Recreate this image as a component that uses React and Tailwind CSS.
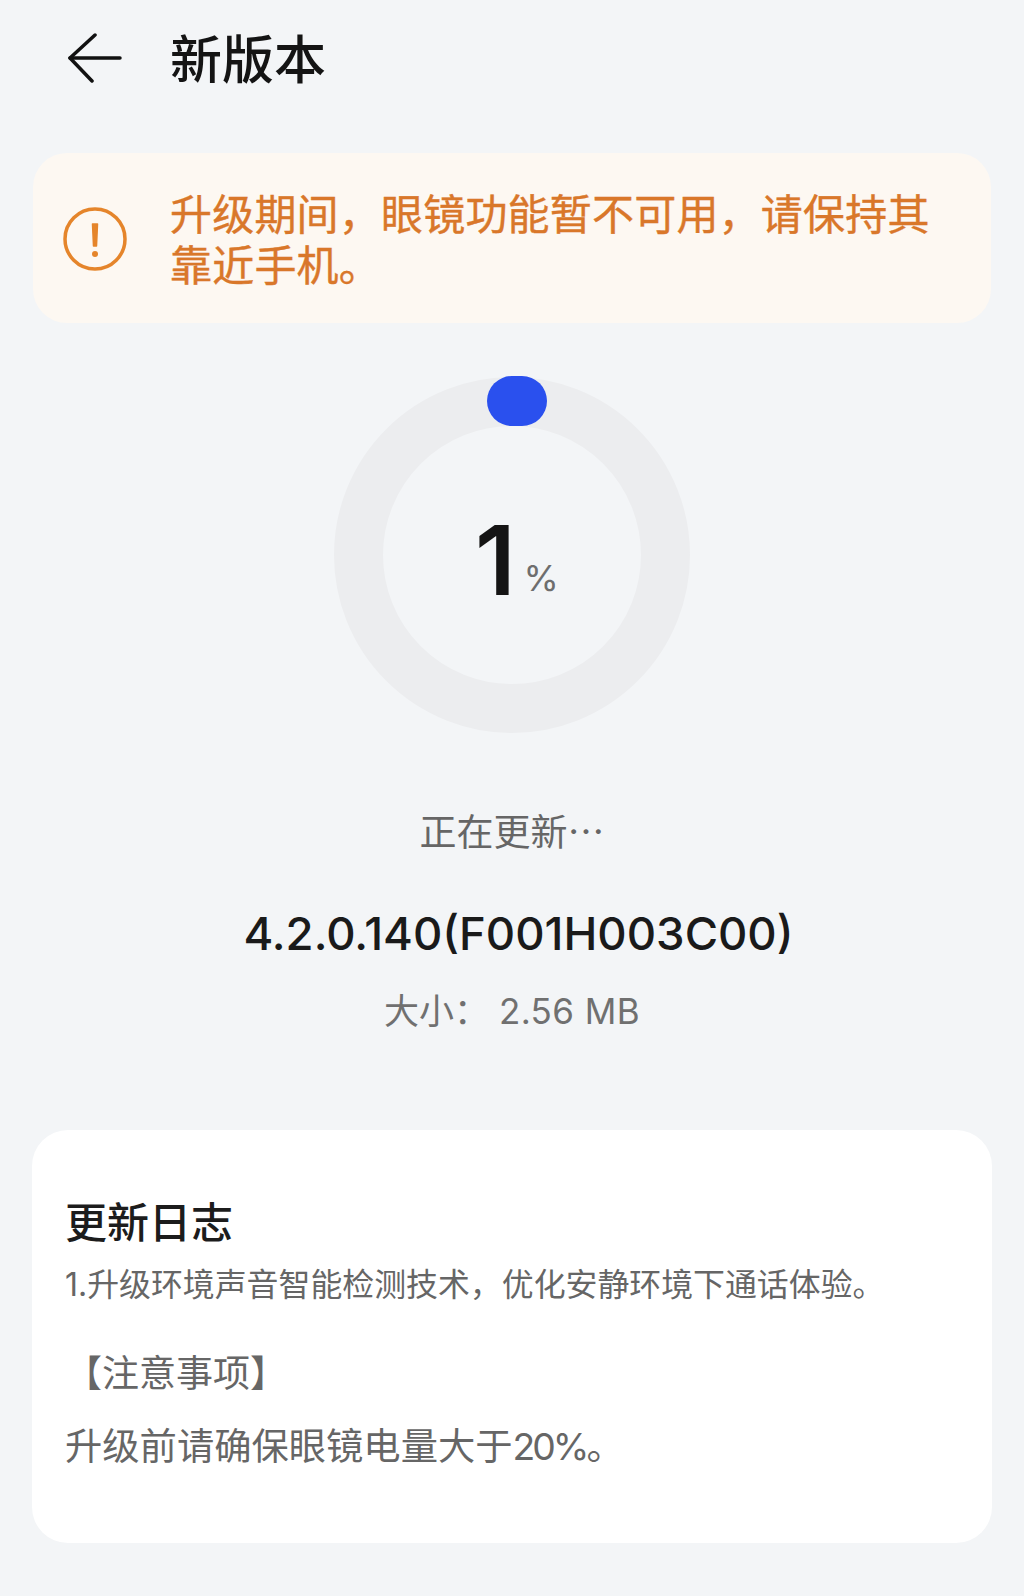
export default function App() {
  return (
    <div className="w-[1024px] h-[1596px] bg-[#f3f5f7] overflow-hidden font-['Inter','Noto_Sans_CJK_SC',sans-serif]">
      {/* header */}
      <div className="h-[120px] flex items-center pl-[68px]">
        <svg width="54" height="50" viewBox="0 0 54 50" fill="none" stroke="#111" strokeWidth="3.5" strokeLinecap="round" strokeLinejoin="round" className="-translate-y-[2px]">
          <path d="M52 25H2" />
          <path d="M27 2L2 25L24 48" />
        </svg>
        <h1 className="ml-[48px] text-[52px] font-medium leading-none text-[#141414] translate-y-[1px]">新版本</h1>
      </div>

      {/* warning */}
      <div className="mt-[33px] mx-[33px] h-[170px] bg-[#fdf8f2] rounded-[34px] flex items-center pl-[30px] pr-[50px]">
        <svg width="64" height="64" viewBox="0 0 64 64" fill="none" className="shrink-0 translate-y-[1px]">
          <circle cx="32" cy="32" r="30" stroke="#e5852b" strokeWidth="3.5" />
          <path d="M29.5 17H34.5L33.5 39H30.5Z" fill="#e5852b" stroke="#e5852b" strokeWidth="1.5" strokeLinejoin="round" />
          <circle cx="32" cy="47" r="3" fill="#e5852b" />
        </svg>
        <p className="ml-[43px] mt-[4px] text-[42px] leading-[51px] font-normal text-[#d9772a] tracking-[0.2px] [-webkit-text-stroke:0.4px_#d9772a]">
          升级期间，眼镜功能暂不可用，请保持其靠近手机。
        </p>
      </div>

      {/* progress ring */}
      <div className="mt-[54px] flex justify-center">
        <div className="relative w-[356px] h-[356px] rounded-full border-[49px] border-[#ecedef] flex items-center justify-center">
          <div className="absolute top-[-50px] left-[104px] w-[60px] h-[50px] rounded-[25px] bg-[#2a50ee]" />
          <div className="flex items-end translate-x-[5px] translate-y-[5px]">
            <span className="text-[96px] leading-none font-semibold text-[#141414]">1</span>
            <span className="ml-[8px] mb-[12px] text-[36px] leading-none text-[#6e6e6e]">%</span>
          </div>
        </div>
      </div>

      {/* status */}
      <div className="mt-[78px] flex flex-col items-center">
        <p className="text-[37px] leading-[44px] text-[#666]">正在更新⋯</p>
        <p className="mt-[51px] pl-[13px] text-[45.5px] leading-[56px] font-medium text-[#1a1a1a]">4.2.0.140(F001H003C00)</p>
        <p className="mt-[27px] text-[35px] leading-[44px] text-[#707070]">大小： <span className="tracking-[0.4px]">2.56 MB</span></p>
      </div>

      {/* changelog */}
      <div className="mt-[97px] mx-[32px] h-[413px] bg-white rounded-[36px] pl-[33px] pt-[67px]">
        <h2 className="text-[42px] leading-[52px] font-medium text-[#1c1c1c]">更新日志</h2>
        <p className="mt-[16px] text-[31.9px] leading-[40px] text-[#666]">1.升级环境声音智能检测技术，优化安静环境下通话体验。</p>
        <p className="mt-[47px] text-[37px] leading-[44px] text-[#666]">【注意事项】</p>
        <p className="mt-[29px] text-[37.3px] leading-[44px] text-[#666]">升级前请确保眼镜电量大于<span className="tracking-[-3px]">20%</span>。</p>
      </div>
    </div>
  );
}
